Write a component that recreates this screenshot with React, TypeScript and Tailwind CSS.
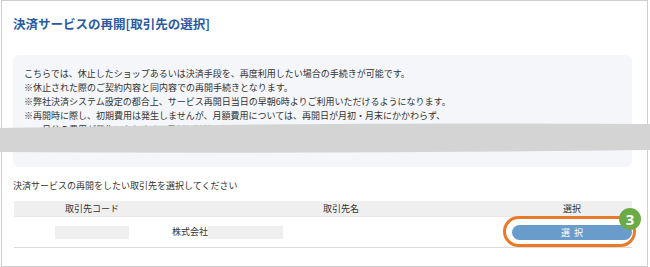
import React from "react";

const font = { fontFamily: '"Noto Sans CJK JP", "Noto Sans", sans-serif' };

export default function App() {
  return (
    <div className="relative w-[650px] h-[267px] bg-white overflow-hidden" style={font}>
      <div className="ml-[1px] w-[647px] h-[267px] border border-[#cfcfcf] pl-[11px] pt-[13px]">
        <h1 className="text-[12.5px] leading-[20px] font-bold text-[#2a5aa3]">決済サービスの再開[取引先の選択]</h1>
        <div className="mt-[21px] w-[619px] h-[112px] rounded-[6px] bg-[#f4f6f9] pl-[11px] pt-[12px] text-[9px] leading-[14px] text-[#333]">
          <p>こちらでは、休止したショップあるいは決済手段を、再度利用したい場合の手続きが可能です。</p>
          <p>※休止された際のご契約内容と同内容での再開手続きとなります。</p>
          <p>※弊社決済システム設定の都合上、サービス再開日当日の早朝6時よりご利用いただけるようになります。</p>
          <p>※再開時に際し、初期費用は発生しませんが、月額費用については、再開日が月初・月末にかかわらず、</p>
          <p>　一月分の費用が発生いたします。日割り計算は行っておりませんので、予めご了承ください。</p>
          <p>　再開のお手続き完了後、登録メールアドレスへご案内をお送りいたします。</p>
        </div>
        <p className="mt-[12px] text-[9px] leading-[14px] text-[#333]">決済サービスの再開をしたい取引先を選択してください</p>
        <div className="mt-[8px] ml-[1px] w-[618px] text-[9px] text-[#333]">
          <div className="grid grid-cols-[156px_342px_120px] h-[16px] items-center bg-[#efefef] border-b border-[#e6e6e6]">
            <div className="text-center">取引先コード</div>
            <div className="text-center">取引先名</div>
            <div className="text-center">選択</div>
          </div>
          <div className="grid grid-cols-[156px_342px_120px] h-[31px] items-center border-b border-[#dcdcdc]">
            <div className="flex justify-center">
              <div className="w-[74px] h-[13px] bg-[#efefef]" />
            </div>
            <div className="flex items-center pl-[2px]">
              <span>株式会社</span>
              <div className="w-[75px] h-[13px] bg-[#efefef]" />
            </div>
            <div className="relative h-[15px]">
              <button className="w-[120px] h-[15px] rounded-full bg-[#6a9ccb] text-white text-[9px] leading-[15px] tracking-[4px] pl-[4px]">
                選択
              </button>
              <div className="absolute left-[-9px] top-[-9px] w-[133px] h-[31px] rounded-full border-[3px] border-[#ea7a28]" />
              <div className="absolute left-[107px] top-[-17px] w-[22px] h-[22px] rounded-full bg-[#6aab45] text-white text-[15px] font-bold leading-[22px] text-center" style={{ fontFamily: '"Noto Sans", "Liberation Sans", sans-serif' }}>
                3
              </div>
            </div>
          </div>
        </div>
      </div>
      <svg className="absolute left-0 top-0 pointer-events-none" width="650" height="267" viewBox="0 0 650 267">
        <path d="M0,128 Q325,122 650,124 L650,150 Q325,154 0,152 Z" fill="#d4d4d4" />
      </svg>
    </div>
  );
}
